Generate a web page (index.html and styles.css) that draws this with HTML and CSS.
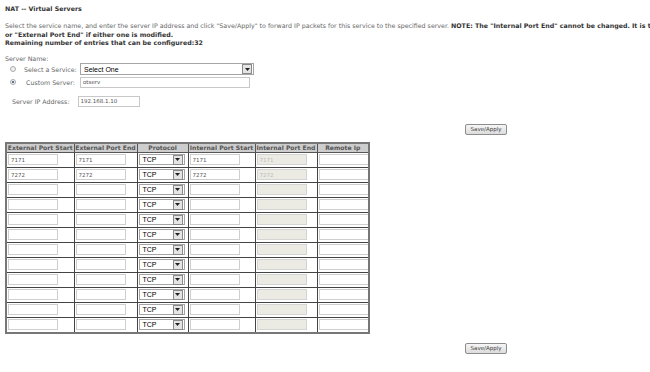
FILE: index.html
```html
<!DOCTYPE html>
<html>
    <head>
        <link rel="stylesheet" href="styles.css">
    </head>
    <body>
        <div class="page">
            <h1 class="title">NAT -- Virtual Servers</h1>

            <p class="intro">
                Select the service name, and enter the server IP address and click "Save/Apply" to forward IP packets for this service to the specified server.
                <b>NOTE: The "Internal Port End" cannot be changed. It is the same as "External Port Start"</b><br>
                <b>or "External Port End" if either one is modified.</b><br>
                <b>Remaining number of entries that can be configured:32</b>
            </p>

            <div class="server-name">Server Name:</div>
            <div class="choices">
                <span class="radio"></span>
                <label>Select a Service:</label>
                <div class="select wide"><span class="select-text">Select One</span><span class="arrow"><svg width="5" height="3" viewBox="0 0 5 3"><path d="M0 0h5L2.5 3z" fill="#222"/></svg></span></div>

                <span class="radio checked"></span>
                <label class="indent">Custom Server:</label>
                <input class="field custom" type="text" value="otserv">
            </div>

            <div class="ip-row">
                <label>Server IP Address:</label>
                <input class="field ip" type="text" value="192.168.1.10">
            </div>

            <div class="actions first"><button>Save/Apply</button></div>

            <table class="ports">
                <colgroup>
                    <col style="width: 68px">
                    <col style="width: 63px">
                    <col style="width: 51px">
                    <col style="width: 67px">
                    <col style="width: 62px">
                    <col style="width: 52px">
                </colgroup>
                <tr>
                    <th>External Port Start</th>
                    <th>External Port End</th>
                    <th>Protocol</th>
                    <th>Internal Port Start</th>
                    <th>Internal Port End</th>
                    <th>Remote Ip</th>
                </tr>
                <tr>
                    <td><input class="cell-input" value="7171"></td>
                    <td><input class="cell-input" value="7171"></td>
                    <td><div class="select proto"><span class="select-text">TCP</span><span class="arrow"><svg width="5" height="3" viewBox="0 0 5 3"><path d="M0 0h5L2.5 3z" fill="#222"/></svg></span></div></td>
                    <td><input class="cell-input" value="7171"></td>
                    <td><input class="cell-input" value="7171" disabled></td>
                    <td><input class="cell-input"></td>
                </tr>
                <tr>
                    <td><input class="cell-input" value="7272"></td>
                    <td><input class="cell-input" value="7272"></td>
                    <td><div class="select proto"><span class="select-text">TCP</span><span class="arrow"><svg width="5" height="3" viewBox="0 0 5 3"><path d="M0 0h5L2.5 3z" fill="#222"/></svg></span></div></td>
                    <td><input class="cell-input" value="7272"></td>
                    <td><input class="cell-input" value="7272" disabled></td>
                    <td><input class="cell-input"></td>
                </tr>
                <tr>
                    <td><input class="cell-input"></td>
                    <td><input class="cell-input"></td>
                    <td><div class="select proto"><span class="select-text">TCP</span><span class="arrow"><svg width="5" height="3" viewBox="0 0 5 3"><path d="M0 0h5L2.5 3z" fill="#222"/></svg></span></div></td>
                    <td><input class="cell-input"></td>
                    <td><input class="cell-input" disabled></td>
                    <td><input class="cell-input"></td>
                </tr>
                <tr>
                    <td><input class="cell-input"></td>
                    <td><input class="cell-input"></td>
                    <td><div class="select proto"><span class="select-text">TCP</span><span class="arrow"><svg width="5" height="3" viewBox="0 0 5 3"><path d="M0 0h5L2.5 3z" fill="#222"/></svg></span></div></td>
                    <td><input class="cell-input"></td>
                    <td><input class="cell-input" disabled></td>
                    <td><input class="cell-input"></td>
                </tr>
                <tr>
                    <td><input class="cell-input"></td>
                    <td><input class="cell-input"></td>
                    <td><div class="select proto"><span class="select-text">TCP</span><span class="arrow"><svg width="5" height="3" viewBox="0 0 5 3"><path d="M0 0h5L2.5 3z" fill="#222"/></svg></span></div></td>
                    <td><input class="cell-input"></td>
                    <td><input class="cell-input" disabled></td>
                    <td><input class="cell-input"></td>
                </tr>
                <tr>
                    <td><input class="cell-input"></td>
                    <td><input class="cell-input"></td>
                    <td><div class="select proto"><span class="select-text">TCP</span><span class="arrow"><svg width="5" height="3" viewBox="0 0 5 3"><path d="M0 0h5L2.5 3z" fill="#222"/></svg></span></div></td>
                    <td><input class="cell-input"></td>
                    <td><input class="cell-input" disabled></td>
                    <td><input class="cell-input"></td>
                </tr>
                <tr>
                    <td><input class="cell-input"></td>
                    <td><input class="cell-input"></td>
                    <td><div class="select proto"><span class="select-text">TCP</span><span class="arrow"><svg width="5" height="3" viewBox="0 0 5 3"><path d="M0 0h5L2.5 3z" fill="#222"/></svg></span></div></td>
                    <td><input class="cell-input"></td>
                    <td><input class="cell-input" disabled></td>
                    <td><input class="cell-input"></td>
                </tr>
                <tr>
                    <td><input class="cell-input"></td>
                    <td><input class="cell-input"></td>
                    <td><div class="select proto"><span class="select-text">TCP</span><span class="arrow"><svg width="5" height="3" viewBox="0 0 5 3"><path d="M0 0h5L2.5 3z" fill="#222"/></svg></span></div></td>
                    <td><input class="cell-input"></td>
                    <td><input class="cell-input" disabled></td>
                    <td><input class="cell-input"></td>
                </tr>
                <tr>
                    <td><input class="cell-input"></td>
                    <td><input class="cell-input"></td>
                    <td><div class="select proto"><span class="select-text">TCP</span><span class="arrow"><svg width="5" height="3" viewBox="0 0 5 3"><path d="M0 0h5L2.5 3z" fill="#222"/></svg></span></div></td>
                    <td><input class="cell-input"></td>
                    <td><input class="cell-input" disabled></td>
                    <td><input class="cell-input"></td>
                </tr>
                <tr>
                    <td><input class="cell-input"></td>
                    <td><input class="cell-input"></td>
                    <td><div class="select proto"><span class="select-text">TCP</span><span class="arrow"><svg width="5" height="3" viewBox="0 0 5 3"><path d="M0 0h5L2.5 3z" fill="#222"/></svg></span></div></td>
                    <td><input class="cell-input"></td>
                    <td><input class="cell-input" disabled></td>
                    <td><input class="cell-input"></td>
                </tr>
                <tr>
                    <td><input class="cell-input"></td>
                    <td><input class="cell-input"></td>
                    <td><div class="select proto"><span class="select-text">TCP</span><span class="arrow"><svg width="5" height="3" viewBox="0 0 5 3"><path d="M0 0h5L2.5 3z" fill="#222"/></svg></span></div></td>
                    <td><input class="cell-input"></td>
                    <td><input class="cell-input" disabled></td>
                    <td><input class="cell-input"></td>
                </tr>
                <tr>
                    <td><input class="cell-input"></td>
                    <td><input class="cell-input"></td>
                    <td><div class="select proto"><span class="select-text">TCP</span><span class="arrow"><svg width="5" height="3" viewBox="0 0 5 3"><path d="M0 0h5L2.5 3z" fill="#222"/></svg></span></div></td>
                    <td><input class="cell-input"></td>
                    <td><input class="cell-input" disabled></td>
                    <td><input class="cell-input"></td>
                </tr>
            </table>

            <div class="actions last"><button>Save/Apply</button></div>
        </div>
    </body>
</html>
```

FILE: styles.css
```css
html, body {
    overflow: hidden;
}

body {
    margin: 0;
    font-family: "DejaVu Sans", sans-serif;
    font-size: 6.3px;
    color: #666;
    background: #fff;
}

.page {
    padding: 5px 5px;
}

.title {
    margin: 0;
    font-size: 6.3px;
    font-weight: bold;
    line-height: 7px;
    color: #333;
}

.intro {
    margin: 10px 0 0;
    line-height: 8.5px;
    white-space: nowrap;
}

.intro b {
    color: #333;
}

.server-name {
    margin-top: 7px;
    line-height: 8px;
}

.choices {
    display: grid;
    grid-template-columns: 15px 57px auto;
    grid-auto-rows: 13px;
    align-items: center;
    margin-left: 3px;
}

.choices label {
    padding-left: 1px;
}

.choices label.indent {
    padding-left: 3px;
}

.radio {
    width: 6px;
    height: 6px;
    border: 1px solid #aaa;
    border-radius: 50%;
    background: #f0f0f0;
    box-sizing: border-box;
    position: relative;
    margin-left: 2px;
}

.radio.checked::after {
    content: "";
    position: absolute;
    left: 1px;
    top: 1px;
    width: 2px;
    height: 2px;
    border-radius: 50%;
    background: #1c4f8c;
}

.select {
    display: flex;
    align-items: center;
    box-sizing: border-box;
    height: 12px;
    border: 1px solid #a5a5a5;
    background: #fff;
    font-family: "Liberation Sans", sans-serif;
    color: #000;
}

.select-text {
    flex: 1;
    padding-left: 3px;
}

.select.wide {
    width: 174px;
    font-size: 7px;
}

.arrow {
    display: flex;
    align-items: center;
    justify-content: center;
    width: 8px;
    height: 8px;
    margin-right: 1px;
    border: 1px solid #8a8a8a;
    background: #e4e4e4;
}

.field {
    box-sizing: border-box;
    height: 11px;
    padding: 0 2px;
    border: 1px solid #c8c8c8;
    font-family: "DejaVu Sans", sans-serif;
    font-size: 5.5px;
    color: #555;
    outline: none;
}

.field.custom {
    width: 170px;
}

.ip-row {
    display: flex;
    align-items: center;
    gap: 8px;
    margin-top: 7px;
    padding-left: 7px;
}

.field.ip {
    width: 62px;
}

.actions {
    padding-left: 460px;
}

.actions.first {
    margin-top: 17px;
}

.actions.last {
    margin-top: 9px;
}

button {
    box-sizing: border-box;
    height: 11px;
    width: 42px;
    padding: 0;
    border: 1px solid #8d8d8d;
    border-radius: 2px;
    background: linear-gradient(#f6f6f6, #dcdcdc);
    font-family: "DejaVu Sans", sans-serif;
    font-size: 5.5px;
    color: #444;
}

.ports {
    width: 363px;
    table-layout: fixed;
    margin-top: 7px;
    border-collapse: collapse;
    border: 2px solid #777;
}

.ports th {
    height: 8px;
    padding: 0;
    background: #cdcdcd;
    border: 1px solid #555;
    font-size: 6.1px;
    line-height: 8px;
    font-weight: bold;
    color: #555;
    white-space: nowrap;
    overflow: hidden;
}

.ports td {
    height: 14px;
    padding: 0 1px;
    border: 1px solid #444;
}

.cell-input {
    display: block;
    box-sizing: border-box;
    width: 50px;
    height: 11px;
    padding: 0 2px;
    border: 1px solid #cfcfcf;
    font-family: "DejaVu Sans", sans-serif;
    font-size: 5.5px;
    color: #555;
    outline: none;
}

.cell-input:disabled {
    background: #ebebe4;
    color: #bbb;
    border-color: #d4d4d4;
}

.select.proto {
    width: 46px;
    height: 11px;
    font-size: 7px;
}
```
